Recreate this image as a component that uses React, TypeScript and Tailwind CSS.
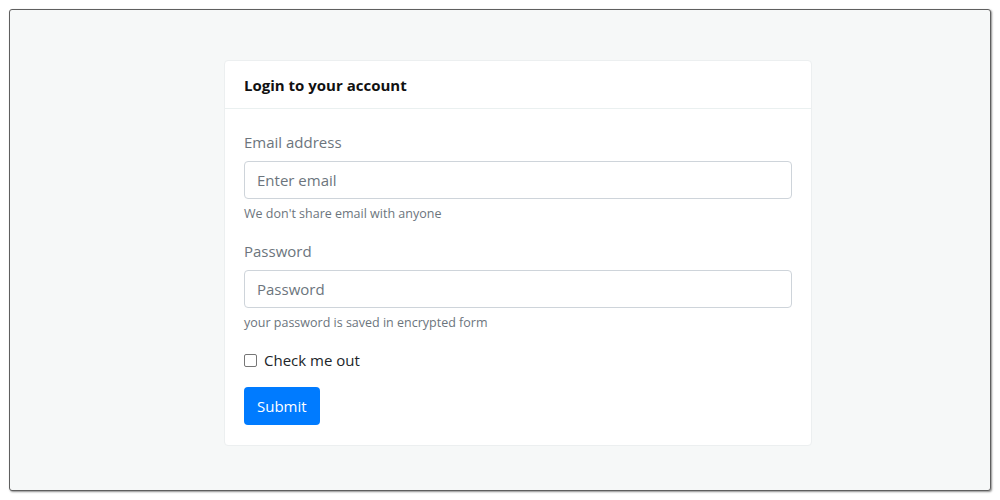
export default function App() {
  return (
    <div className="h-[500px] w-[1000px] bg-white p-[9px] font-['Open_Sans',sans-serif]">
      <div className="h-[482px] rounded-[3px] border border-[#5f5f5f] bg-[#f6f8f8] pt-[50px] pl-[214px] shadow-[1px_1px_2px_rgba(0,0,0,0.45)]">
        <div className="w-[588px] rounded-[4px] border border-[#eceff0] bg-white">
          <div className="flex h-[48px] items-center border-b border-[#eaf0f0] px-[19px] pt-[2px]">
            <h1 className="text-[15px] font-bold text-[#111]">Login to your account</h1>
          </div>
          <form className="px-[19px] pt-[21px] pb-[20px]" onSubmit={(e) => e.preventDefault()}>
            <div className="mb-[16px]">
              <label className="mb-[7px] block text-[15px] leading-[24px] text-[#6c757d]">Email address</label>
              <input
                type="email"
                placeholder="Enter email"
                className="h-[38px] w-full rounded-[4px] border border-[#ced4da] px-[12px] text-[15px] text-[#495057] outline-none placeholder:text-[#6c757d]"
              />
              <div className="mt-[5px] text-[12.5px] leading-[19px] text-[#6c757d]">We don't share email with anyone</div>
            </div>
            <div className="mb-[16px]">
              <label className="mb-[7px] block text-[15px] leading-[24px] text-[#6c757d]">Password</label>
              <input
                type="password"
                placeholder="Password"
                className="h-[38px] w-full rounded-[4px] border border-[#ced4da] px-[12px] text-[15px] text-[#495057] outline-none placeholder:text-[#6c757d]"
              />
              <div className="mt-[5px] text-[12.5px] leading-[19px] text-[#6c757d]">your password is saved in encrypted form</div>
            </div>
            <label className="mb-[15px] flex items-center gap-[7px] text-[15px] leading-[24px] text-[#212529]">
              <span className="h-[13px] w-[13px] rounded-[2px] border border-[#767676] bg-white" />
              Check me out
            </label>
            <button type="submit" className="h-[38px] rounded-[4px] bg-[#007bff] px-[13px] text-[15px] text-white">
              Submit
            </button>
          </form>
        </div>
      </div>
    </div>
  );
}
